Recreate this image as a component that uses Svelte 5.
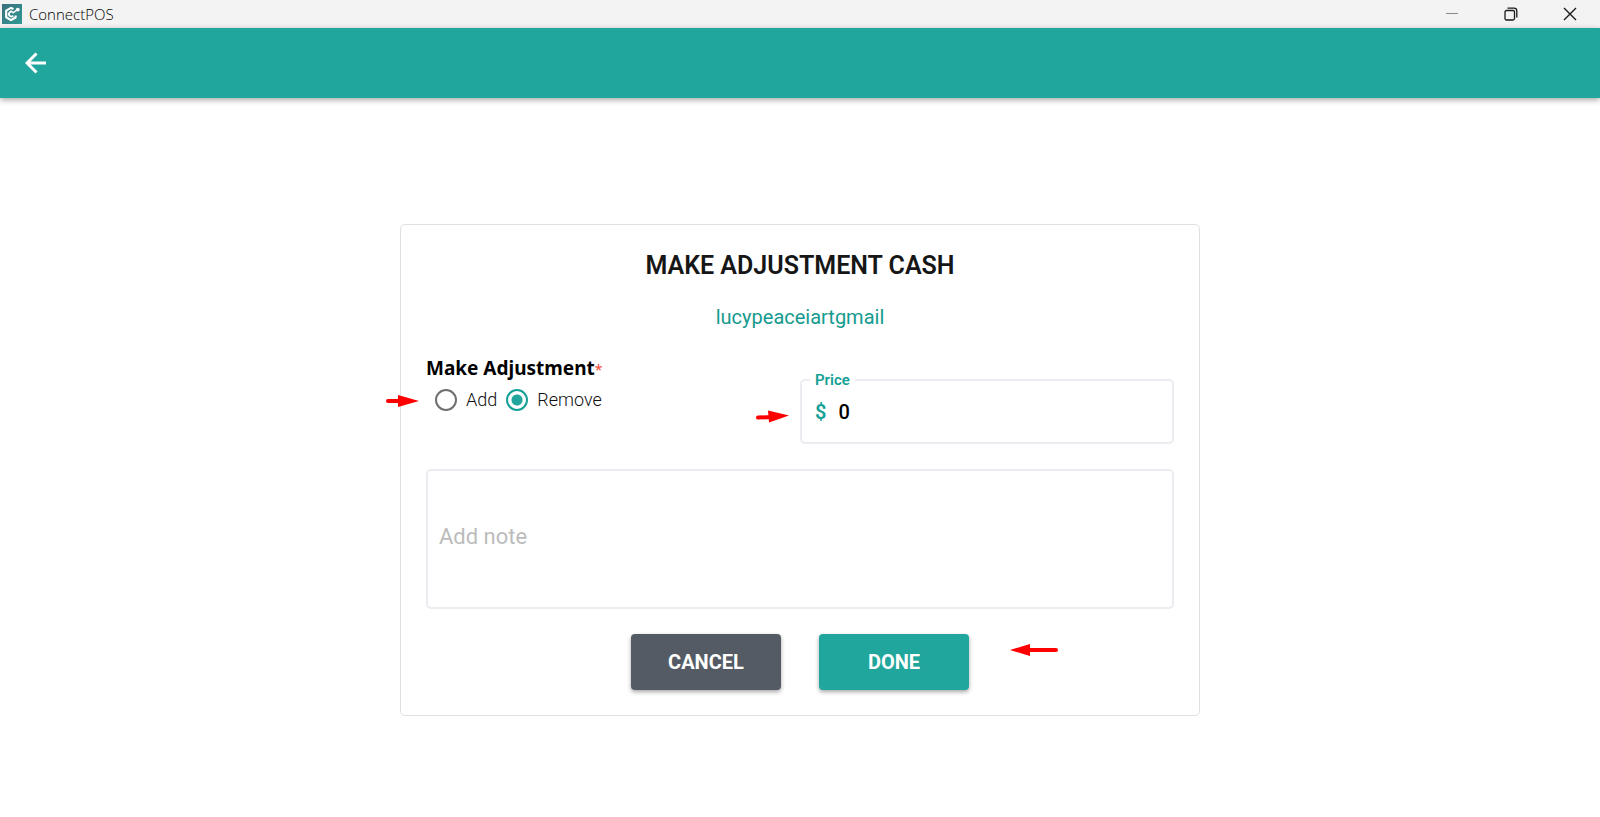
<script lang="ts">
  let adjustment = $state("remove");
  let price = $state("0");
  let note = $state("");
</script>

<div class="window-bar">
  <svg class="logo" width="20" height="20" viewBox="0 0 20 20" aria-hidden="true">
    <defs>
      <linearGradient id="logo-bg" x1="0" y1="0" x2="1" y2="1">
        <stop offset="0" stop-color="#3a6f7c" />
        <stop offset="1" stop-color="#2f9a96" />
      </linearGradient>
    </defs>
    <rect width="20" height="20" fill="url(#logo-bg)" />
    <path
      d="M11.5 5 9 3.9 4.2 6.6v6.6l4.8 2.9 4.6-2.6v-2"
      fill="none"
      stroke="#fff"
      stroke-width="2.2"
      stroke-linejoin="round"
    />
    <path
      d="M11.2 11.6A2.4 2.4 0 1 1 10.6 8"
      fill="none"
      stroke="#fff"
      stroke-width="1.8"
    />
    <path d="m10.5 9.2 4-2.8" stroke="#fff" stroke-width="1.6" />
    <circle cx="15.8" cy="5.6" r="1.9" fill="#fff" />
  </svg>
  <span class="app-name">ConnectPOS</span>
  <div class="window-controls">
    <button type="button" aria-label="Minimize">
      <svg width="14" height="14" viewBox="0 0 14 14">
        <path d="M1 6.5h12" stroke="#8a8a8a" />
      </svg>
    </button>
    <button type="button" aria-label="Restore">
      <svg width="14" height="14" viewBox="0 0 14 14" fill="none" stroke="#1a1a1a" stroke-width="1.3">
        <rect x="1" y="3.5" width="9.5" height="9.5" rx="1.5" />
        <path d="M3.5 1.2H10a2.8 2.8 0 0 1 2.8 2.8v6.5" />
      </svg>
    </button>
    <button type="button" aria-label="Close">
      <svg width="14" height="14" viewBox="0 0 14 14">
        <path d="m1 1 12 12M13 1 1 13" stroke="#1a1a1a" stroke-width="1.4" />
      </svg>
    </button>
  </div>
</div>

<header>
  <button type="button" class="back" aria-label="Back">
    <svg width="22" height="22" viewBox="0 0 22 22" fill="none" stroke="#fff" stroke-width="3">
      <path d="M21 11H3M11.5 1.5 2 11l9.5 9.5" />
    </svg>
  </button>
</header>

<main>
  <form class="card" onsubmit={(e) => e.preventDefault()}>
    <h1>MAKE ADJUSTMENT CASH</h1>
    <p class="account">lucypeaceiartgmail</p>

    <div class="fields">
      <div class="adjustment" role="radiogroup" aria-labelledby="adjustment-label">
        <div class="group-label" id="adjustment-label">Make Adjustment<span class="required">*</span></div>
        <div class="options">
          <label>
            <input type="radio" name="adjustment" value="add" bind:group={adjustment} />
            Add
          </label>
          <label>
            <input type="radio" name="adjustment" value="remove" bind:group={adjustment} />
            Remove
          </label>
          <svg class="arrow arrow-options" width="34" height="14" viewBox="0 0 34 14" aria-hidden="true">
            <path d="M2 7h14" stroke="#f00" stroke-width="4" stroke-linecap="round" />
            <path d="M12 1 33 7 12 13z" fill="#f00" />
          </svg>
        </div>
      </div>

      <div class="price">
        <fieldset>
          <legend><label for="price">Price</label></legend>
          <div class="amount">
            <span class="currency">$</span>
            <input id="price" type="text" inputmode="decimal" bind:value={price} />
          </div>
        </fieldset>
        <svg class="arrow arrow-price" width="34" height="14" viewBox="0 0 34 14" aria-hidden="true">
          <path d="M2 8.6 16 8" stroke="#f00" stroke-width="4" stroke-linecap="round" />
          <path d="m12 1.5 21 5L13 13.5z" fill="#f00" />
        </svg>
      </div>
    </div>

    <textarea aria-label="Add note" placeholder="Add note" bind:value={note}></textarea>

    <div class="actions">
      <button type="button" class="cancel">CANCEL</button>
      <button type="submit" class="done">DONE</button>
      <svg class="arrow arrow-done" width="50" height="14" viewBox="0 0 50 14" aria-hidden="true">
        <path d="M18 7h29" stroke="#f00" stroke-width="4" stroke-linecap="round" />
        <path d="M21 1 1 7l20 6z" fill="#f00" />
      </svg>
    </div>
  </form>
</main>

<style>
  :global(body) {
    background: #fff;
    font-family: Roboto, "Liberation Sans", sans-serif;
    color: #161616;
  }

  button {
    border: 0;
    padding: 0;
    font: inherit;
    cursor: pointer;
  }

  .window-bar {
    display: flex;
    align-items: center;
    height: 28px;
    padding-left: 2px;
    background: #f3f3f3;
  }

  .app-name {
    margin-left: 7px;
    font-family: "Open Sans", "Noto Sans", sans-serif;
    font-size: 15px;
    font-weight: 300;
    color: #000;
  }

  .window-controls {
    display: flex;
    margin-left: auto;
    padding-right: 1px;
  }

  .window-controls button {
    display: grid;
    place-items: center;
    width: 59px;
    height: 28px;
    background: none;
  }

  header {
    display: flex;
    align-items: center;
    height: 70px;
    padding: 0 25px;
    background: #20a69c;
    box-shadow: 0 2px 6px rgba(0, 0, 0, 0.35);
  }

  .back {
    display: grid;
    background: none;
  }

  main {
    padding: 126px 25% 40px;
  }

  .card {
    padding: 26px 25px 25px;
    border: 1px solid #e0e0e0;
    border-radius: 5px;
  }

  h1 {
    margin: 0 0 24px;
    font-size: 25px;
    font-weight: 600;
    line-height: 30px;
    text-align: center;
  }

  .account {
    margin: 0 0 27px;
    color: #159a8f;
    font-size: 20px;
    line-height: 24px;
    text-align: center;
  }

  .fields {
    display: grid;
    grid-template-columns: 1fr 1fr;
    margin-bottom: 25px;
  }

  .group-label {
    color: #000;
    font-family: "Noto Sans", "Open Sans", sans-serif;
    font-size: 19px;
    font-weight: 700;
    line-height: 24px;
  }

  .required {
    color: #f44336;
    font-size: 14px;
    font-weight: 400;
  }

  .options {
    position: relative;
    display: flex;
    gap: 9px;
    margin-top: 6px;
    padding-left: 9px;
  }

  .options label {
    display: flex;
    align-items: center;
    gap: 9px;
    font-size: 18px;
    font-weight: 300;
    line-height: 24px;
    color: #111;
  }

  input[type="radio"] {
    appearance: none;
    width: 22px;
    height: 22px;
    margin: 0;
    border: 2px solid #6f6f6f;
    border-radius: 50%;
  }

  input[type="radio"]:checked {
    border-color: #14a096;
    background: radial-gradient(circle, #20a69c 5px, #fff 6px);
  }

  .price {
    position: relative;
    padding-top: 16px;
  }

  fieldset {
    height: 72px;
    box-sizing: border-box;
    min-width: 0;
    margin: 0;
    padding: 0 13px;
    border: 2px solid #ebecf1;
    border-radius: 5px;
  }

  legend {
    margin-left: -5px;
    padding: 0 5px;
    color: #14a096;
    font-size: 15px;
    font-weight: 600;
    line-height: 16px;
  }

  .amount {
    display: flex;
    align-items: center;
    gap: 12px;
    padding-top: 12px;
    font-size: 20px;
    font-weight: 500;
    line-height: 24px;
  }

  .currency {
    color: #14a096;
    font-weight: 600;
  }

  .amount input {
    flex: 1;
    min-width: 0;
    padding: 0;
    border: 0;
    outline: 0;
    background: none;
    color: #000;
    font: inherit;
  }

  textarea {
    display: block;
    box-sizing: border-box;
    width: 100%;
    height: 140px;
    margin: 0 0 25px;
    padding: 52px 11px;
    border: 2px solid #ebecf1;
    border-radius: 5px;
    outline: 0;
    resize: none;
    font-family: inherit;
    font-size: 22px;
    line-height: 28px;
  }

  textarea::placeholder {
    color: #bcbcbc;
  }

  .actions {
    position: relative;
    display: flex;
    justify-content: center;
    gap: 38px;
  }

  .actions button {
    width: 150px;
    height: 56px;
    border-radius: 4px;
    color: #fff;
    font-size: 20px;
    font-weight: 700;
    box-shadow: 0 2px 4px rgba(0, 0, 0, 0.35);
  }

  .actions .cancel {
    background: #545b64;
  }

  .actions .done {
    background: #20a69c;
  }

  /* Pointers laid over the form beside each step */
  .arrow {
    position: absolute;
    pointer-events: none;
  }

  .arrow-options {
    top: 6px;
    left: -40px;
  }

  .arrow-price {
    top: 53px;
    left: -44px;
  }

  .arrow-done {
    top: 9px;
    left: calc(50% + 209px);
  }
</style>
